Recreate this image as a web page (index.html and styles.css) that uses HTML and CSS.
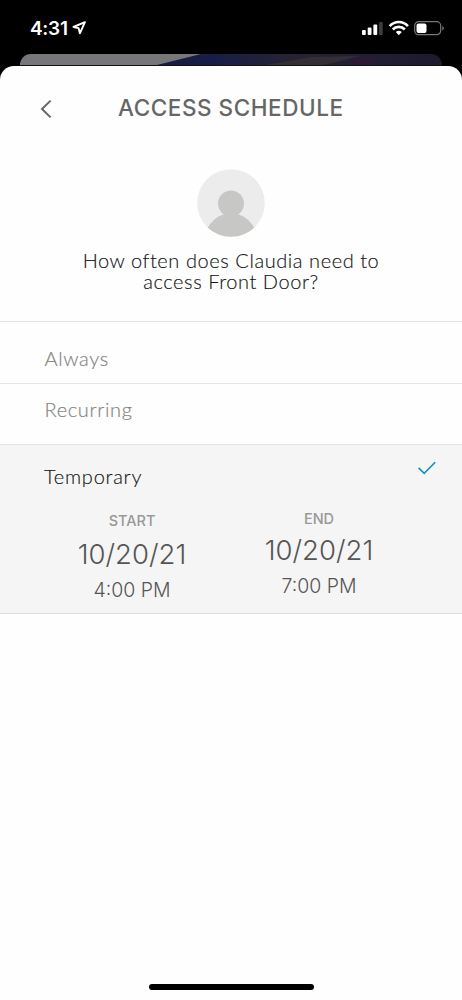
FILE: index.html
```html
<!DOCTYPE html>
<html lang="en">
<head>
<meta charset="utf-8">
<title>Access Schedule</title>
<link rel="stylesheet" href="styles.css">
</head>
<body>
<div class="phone">
  <header class="status">
    <div class="clock"><span class="time">4:31</span>
      <svg class="location" viewBox="0 0 14 14" width="14" height="14"><path d="M12.9 1.2 1.5 6 6.6 7.2 7.9 12.3Z" fill="none" stroke="#fff" stroke-width="1.9" stroke-linejoin="round"/></svg>
    </div>
    <svg class="indicators" viewBox="0 0 84 16" width="84" height="16">
      <g fill="#fff"><rect x="1" y="10" width="3.8" height="5" rx="1"/><rect x="6.7" y="7.5" width="3.8" height="7.5" rx="1"/><rect x="12.4" y="4.5" width="3.8" height="10.5" rx="1"/><rect x="18" y="2" width="3.8" height="13" rx="1" fill="#3c3c3c"/></g>
      <g fill="none" stroke="#fff" stroke-width="2.6"><path d="M28.7 6.2C33.5.6 42.1.6 46.9 6.2"/><path d="M31.8 9.5C35 6 40.6 6 43.8 9.5"/></g>
      <path d="M34.8 12Q37.8 9.5 40.8 12L37.8 15.2Z" fill="#fff"/>
      <rect x="53.7" y="1.7" width="26" height="13" rx="4" fill="none" stroke="#777" stroke-width="1.2"/>
      <rect x="55.5" y="3.5" width="10" height="9.4" rx="2" fill="#fff"/>
      <path d="M81.3 6v4.5q1.6-.7 1.6-2.2T81.3 6" fill="#777"/>
    </svg>
  </header>
  <div class="backdrop">
    <svg viewBox="0 0 422 12" width="422" height="12" preserveAspectRatio="none">
      <defs><linearGradient id="photo"><stop offset="0" stop-color="#171b3d"/><stop offset=".45" stop-color="#171d46"/><stop offset=".65" stop-color="#262334"/><stop offset="1" stop-color="#1d1a30"/></linearGradient></defs>
      <path d="M0 0h422v12H0z" fill="url(#photo)"/>
      <path d="M0 0H181L133 12H0z" fill="#77777b"/>
      <path d="M240 12 292 3 340 2 300 12z" fill="#342e35"/>
      <path d="M331 4h25v8h-25z" fill="#2b1a33"/>
    </svg>
  </div>
  <main class="sheet">
    <div class="titlebar">
      <svg class="back" viewBox="0 0 12 20" width="12" height="20"><path d="M10.6 1.6 2 10l8.6 8.4" fill="none" stroke="#666" stroke-width="2"/></svg>
      <h1>ACCESS SCHEDULE</h1>
    </div>
    <section class="intro">
      <svg class="avatar" viewBox="0 0 68 68" width="68" height="68">
        <defs><clipPath id="disc"><circle cx="34" cy="34" r="33.8"/></clipPath></defs>
        <g clip-path="url(#disc)"><path d="M0 0h68v68H0z" fill="#ececec"/><path d="M10 60Q16 49 26 45.5H42Q52 49 58 60V68H10z" fill="#c7c7c6"/><circle cx="34" cy="34.5" r="13" fill="#c7c7c6"/></g>
      </svg>
      <p>How often does Claudia need to<br>access Front Door?</p>
    </section>
    <div class="option always"><span>Always</span></div>
    <div class="option recurring"><span>Recurring</span></div>
    <section class="temporary">
      <div class="heading"><span>Temporary</span>
        <svg class="check" viewBox="0 0 18 14" width="18" height="14"><path d="M.6 6.9 6.2 12.4 17.2 1.3" fill="none" stroke="#1294b8" stroke-width="1.6"/></svg>
      </div>
      <div class="dates">
        <div class="date start"><span class="label">START</span><span class="day">10/20/21</span><span class="hour">4:00 PM</span></div>
        <div class="date end"><span class="label">END</span><span class="day">10/20/21</span><span class="hour">7:00 PM</span></div>
      </div>
    </section>
    <div class="home"></div>
  </main>
</div>
</body>
</html>
```
FILE: styles.css
```css
* { box-sizing: border-box; margin: 0; padding: 0; }
body { background: #000; font-family: Lato, "Open Sans", sans-serif; }
svg { display: block; }
.phone { width: 462px; height: 1000px; background: #000; display: flex; flex-direction: column; overflow: hidden; }
.status { height: 54px; flex: none; display: flex; justify-content: space-between; padding: 18px 17px 0 30px; color: #fff; }
.clock { display: flex; gap: 4px; }
.time { font: 600 19px/21px Inter, sans-serif; letter-spacing: -.3px; }
.location { margin-top: 3px; }
.indicators { margin-top: 2px; }
.backdrop { height: 12px; flex: none; margin: 0 20px; border-radius: 11px 11px 0 0; overflow: hidden; border-bottom: 1px solid #111; }
.sheet { flex: 1; background: #fefefe; border-radius: 14px 14px 0 0; display: flex; flex-direction: column; white-space: nowrap; }
.titlebar { height: 102px; display: flex; padding: 28px 0 0 40px; }
.back { margin-top: 5px; }
h1 { font: 500 22.5px/27px Inter, sans-serif; color: #666; margin-left: 66px; letter-spacing: .55px; }
.intro { height: 153px; display: flex; flex-direction: column; align-items: center; font-weight: 300; font-size: 20px; line-height: 21px; color: #161616; letter-spacing: .57px; text-align: center; -webkit-text-stroke: .15px #161616; }
.avatar { margin: 1px 0 13px; }
.option { border-top: 1px solid #e5e5e5; padding-left: 44.5px; font-size: 20px; line-height: 24px; font-weight: 300; color: #858585; letter-spacing: .65px; -webkit-text-stroke: .2px #858585; }
.always { height: 62px; padding-top: 24px; }
.recurring { height: 61px; padding-top: 13px; }
.temporary { height: 170px; background: #f5f5f5; border-top: 1px solid #e4e4e4; border-bottom: 1px solid #dedede; }
.heading { display: flex; justify-content: space-between; padding: 19px 26px 0 44px; height: 64px; font-size: 20px; line-height: 24px; font-weight: 300; color: #161616; letter-spacing: .75px; -webkit-text-stroke: .15px #161616; }
.check { margin-top: -3px; }
.dates { display: flex; padding-left: 39px; gap: 1px; }
.date { width: 186px; display: flex; flex-direction: column; align-items: center; color: #555; font-family: Inter, sans-serif; font-weight: 300; }
.start { padding-top: 3px; }
.end { padding-top: 1px; }
.label { font-size: 14.5px; line-height: 18px; font-weight: 500; color: #999; }
.day { font-size: 27.5px; line-height: 34px; margin-top: 7px; }
.end .day { margin-top: 5px; }
.hour { font-size: 19.5px; line-height: 24px; margin-top: 7px; }
.home { width: 165px; height: 6px; border-radius: 3px; background: #000; margin: auto auto 10px; }
```
